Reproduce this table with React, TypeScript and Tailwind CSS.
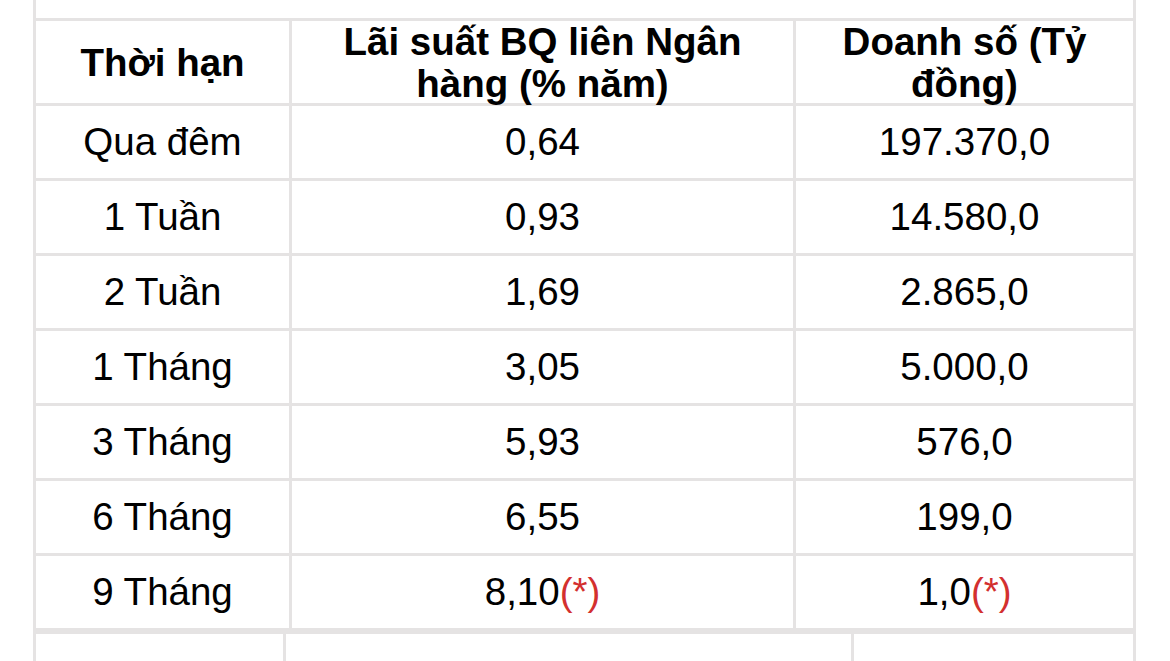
import React from "react";

const rows = [
  { term: "Qua đêm", rate: "0,64", volume: "197.370,0" },
  { term: "1 Tuần", rate: "0,93", volume: "14.580,0" },
  { term: "2 Tuần", rate: "1,69", volume: "2.865,0" },
  { term: "1 Tháng", rate: "3,05", volume: "5.000,0" },
  { term: "3 Tháng", rate: "5,93", volume: "576,0" },
  { term: "6 Tháng", rate: "6,55", volume: "199,0" },
  { term: "9 Tháng", rate: "8,10", volume: "1,0", note: true },
];

const line = "border-[#e5e3e3]";

const App: React.FC = () => {
  return (
    <div
      className="w-[1170px] h-[661px] overflow-hidden bg-white text-black"
      style={{ fontFamily: '"Liberation Sans", Arial, sans-serif' }}
    >
      <div className={`ml-[33px] w-[1103px] border-x-[3px] ${line}`}>
        {/* tail of the previous row */}
        <div className={`h-[21px] border-b-[3px] ${line}`} />

        {/* header */}
        <div className={`grid grid-cols-[256px_504px_337px] h-[85px] border-b-[3px] ${line} font-bold text-[38.5px] leading-[42px]`}>
          <div className={`flex items-center justify-center text-center border-r-[3px] ${line}`}>Thời hạn</div>
          <div className={`flex items-center justify-center text-center border-r-[3px] ${line}`}>
            Lãi suất BQ liên Ngân
            <br />
            hàng (% năm)
          </div>
          <div className="flex items-center justify-center text-center">
            Doanh số (Tỷ
            <br />
            đồng)
          </div>
        </div>

        {rows.map((r) => (
          <div key={r.term} className={`grid grid-cols-[256px_504px_337px] h-[75px] border-b-[3px] ${line} text-[38.5px]`}>
            <div className={`flex items-center justify-center border-r-[3px] ${line}`}>{r.term}</div>
            <div className={`flex items-center justify-center border-r-[3px] ${line}`}>
              {r.rate}
              {r.note && <span className="text-[#d3302f]">(*)</span>}
            </div>
            <div className="flex items-center justify-center">
              {r.volume}
              {r.note && <span className="text-[#d3302f]">(*)</span>}
            </div>
          </div>
        ))}

        {/* next table starts */}
        <div className={`grid grid-cols-[250px_568px_279px] h-[40px] border-t-[3px] ${line}`}>
          <div className={`border-r-[3px] ${line}`} />
          <div className={`border-r-[3px] ${line}`} />
          <div />
        </div>
      </div>
    </div>
  );
};

export default App;
